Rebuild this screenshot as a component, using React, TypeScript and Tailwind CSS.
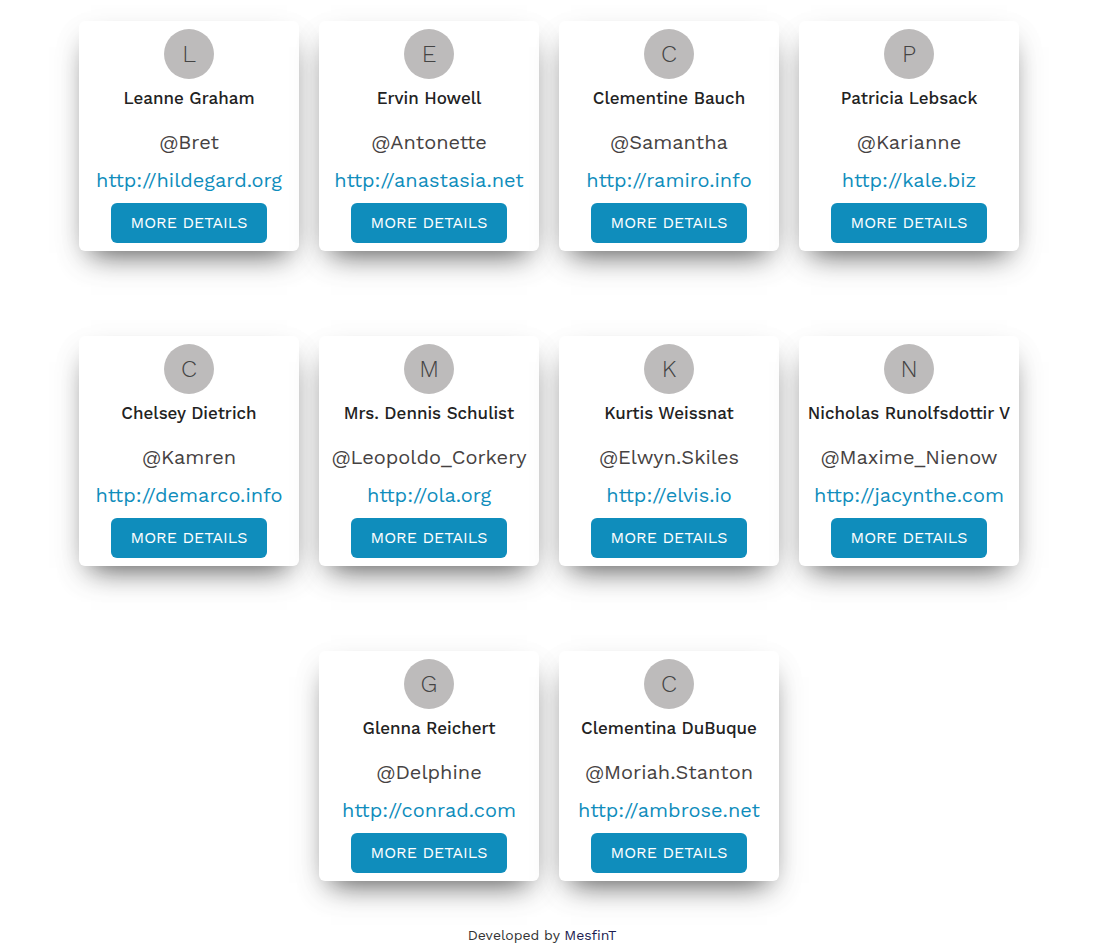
type User = { name: string; username: string; website: string };

const users: User[] = [
  { name: "Leanne Graham", username: "Bret", website: "hildegard.org" },
  { name: "Ervin Howell", username: "Antonette", website: "anastasia.net" },
  { name: "Clementine Bauch", username: "Samantha", website: "ramiro.info" },
  { name: "Patricia Lebsack", username: "Karianne", website: "kale.biz" },
  { name: "Chelsey Dietrich", username: "Kamren", website: "demarco.info" },
  { name: "Mrs. Dennis Schulist", username: "Leopoldo_Corkery", website: "ola.org" },
  { name: "Kurtis Weissnat", username: "Elwyn.Skiles", website: "elvis.io" },
  { name: "Nicholas Runolfsdottir V", username: "Maxime_Nienow", website: "jacynthe.com" },
  { name: "Glenna Reichert", username: "Delphine", website: "conrad.com" },
  { name: "Clementina DuBuque", username: "Moriah.Stanton", website: "ambrose.net" },
];

function UserCard({ user }: { user: User }) {
  return (
    <li className="flex w-[220px] flex-col items-center whitespace-nowrap rounded-md bg-white py-2 shadow-[0_12px_36px_rgba(0,0,0,0.05),0_14px_28px_-12px_rgba(0,0,0,0.7)]">
      <div className="flex size-[50px] items-center justify-center rounded-full bg-[#bdbbbb] text-2xl font-light text-[#444]">
        {user.name[0]}
      </div>
      <h2 className="mt-[7px] text-[17px] leading-6 font-medium text-[#222]">{user.name}</h2>
      <p className="mt-4 text-xl leading-8 text-[#464242]">@{user.username}</p>
      <a href={`http://${user.website}`} className="mt-1.5 text-xl leading-8 text-[#0f8dbc]">
        http://{user.website}
      </a>
      <button type="button" className="mt-[7px] h-10 w-[156px] rounded-md bg-[#0f8dbc] text-base text-white uppercase">
        More details
      </button>
    </li>
  );
}

export default function App() {
  return (
    <div className="bg-white pt-[21px] font-['Work_Sans',Inter,sans-serif]">
      <main>
        <ul className="mx-auto flex max-w-[960px] flex-wrap justify-center gap-x-5 gap-y-[85px]">
          {users.map((user) => (
            <UserCard key={user.username} user={user} />
          ))}
        </ul>
      </main>
      <footer className="mt-11 pr-3.5 text-center text-sm leading-5 text-[#333]">
        Developed by{" "}
        <a href="#" className="text-[#1c1c50]">
          MesfinT
        </a>
      </footer>
    </div>
  );
}
